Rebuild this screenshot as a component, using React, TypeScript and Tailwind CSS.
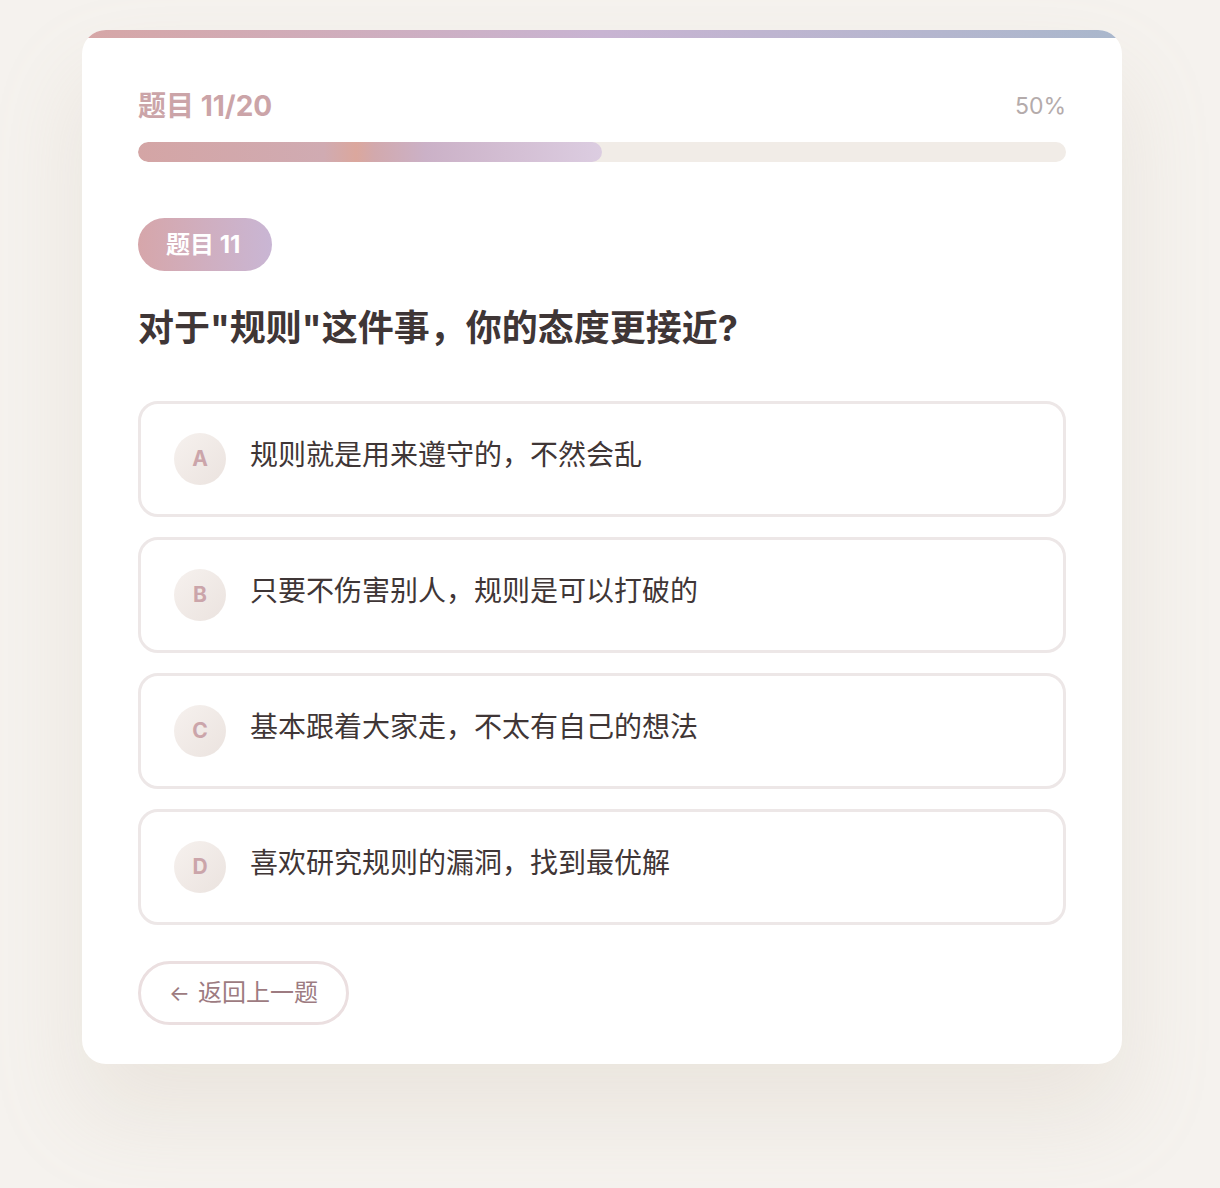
import React from 'react';

const options = [
  { key: 'A', text: '规则就是用来遵守的，不然会乱' },
  { key: 'B', text: '只要不伤害别人，规则是可以打破的' },
  { key: 'C', text: '基本跟着大家走，不太有自己的想法' },
  { key: 'D', text: '喜欢研究规则的漏洞，找到最优解' },
];

const font = { fontFamily: '"Inter", "Noto Sans CJK SC", sans-serif' };

export default function App() {
  const progress = 50;

  return (
    <div className="min-h-[1188px] w-full bg-[#f5f2ee] pt-[30px]" style={font}>
      <div className="relative ml-[82px] w-[1040px] overflow-hidden rounded-[24px] bg-white px-14 pt-[57px] pb-[39px] shadow-[0_50px_90px_rgba(190,170,150,0.18)]">
        {/* top accent */}
        <div className="absolute inset-x-0 top-0 h-2 bg-gradient-to-r from-[#d6a6a6] via-[#c8b4d2] to-[#a9b7cc]" />

        {/* header */}
        <div className="flex items-center justify-between leading-[39px]">
          <span className="text-[28px] font-bold text-[#cba4a8]">题目 11/20</span>
          <span className="text-[23px] text-[#b4abab]">{progress}%</span>
        </div>

        {/* progress */}
        <div className="mt-4 h-5 w-full overflow-hidden rounded-full bg-[#f1ece7]">
          <div
            className="h-full rounded-full bg-[linear-gradient(90deg,#d4a5a5_0%,#d0abb2_40%,#dba79d_47%,#d2a9ad_51%,#cbb1c7_62%,#dccde1_100%)]"
            style={{ width: `${progress}%` }}
          />
        </div>

        {/* badge */}
        <div className="mt-14 inline-flex h-[53px] items-center rounded-full bg-gradient-to-r from-[#d6a6aa] to-[#c9b6d4] pl-[28px] pr-[32px] text-[24px] font-bold text-white">
          题目 11
        </div>

        {/* question */}
        <h1 className="mt-[34px] text-[36px] font-bold leading-[46px] text-[#3f3636]">
          对于"规则"这件事，你的态度更接近?
        </h1>

        {/* options */}
        <div className="mt-[50px] flex flex-col gap-5">
          {options.map((o) => (
            <button
              key={o.key}
              className="flex h-[116px] w-full items-center gap-6 rounded-[20px] border-[3px] border-[#ede7e7] bg-white pl-[33px] text-left"
            >
              <span className="flex h-[52px] w-[52px] shrink-0 items-center justify-center rounded-full bg-gradient-to-br from-[#f6f1ee] to-[#ebe3df] text-[21px] font-bold text-[#cba5aa]">
                {o.key}
              </span>
              <span className="pb-2 text-[28px] leading-[40px] text-[#3f3636]">{o.text}</span>
            </button>
          ))}
        </div>

        {/* back */}
        <button className="mt-9 flex h-16 items-center gap-2 rounded-full border-[3px] border-[#ebdfe0] bg-white pr-[28px] pl-[28px] text-[24px] text-[#9d7b81]">
          <span className="text-[22px]">←</span>
          <span>返回上一题</span>
        </button>
      </div>
    </div>
  );
}
